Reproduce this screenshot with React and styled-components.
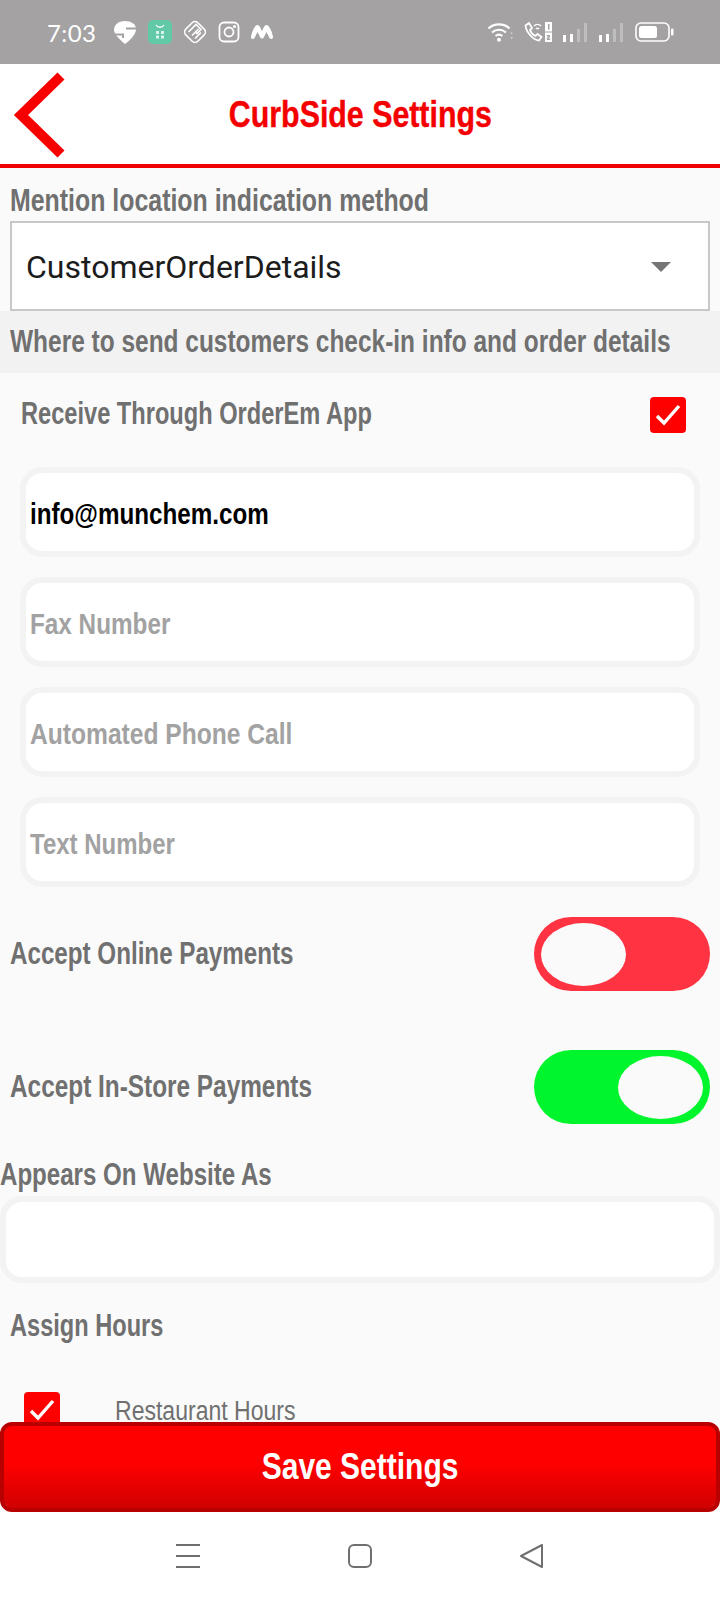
import React from "react";
import styled, { createGlobalStyle } from "styled-components";

const GlobalStyle = createGlobalStyle`
  html, body {
    margin: 0;
    padding: 0;
    background: #fafafa;
  }
  * {
    box-sizing: border-box;
  }
`;

const Page = styled.div`
  width: 720px;
  height: 1600px;
  display: flex;
  flex-direction: column;
  overflow: hidden;
  background: #fafafa;
  font-family: "Liberation Sans", Arial, sans-serif;
`;

const StatusBar = styled.div`
  height: 64px;
  flex-shrink: 0;
  background: #a4a2a3;
  display: flex;
  align-items: center;
  padding: 0 46px 0 47px;
  color: #fff;
`;

const Clock = styled.span`
  font-family: "Lato", sans-serif;
  font-size: 24px;
  letter-spacing: 0.4px;
  width: 66px;
`;

const StatusIcons = styled.div`
  display: flex;
  align-items: center;
  gap: ${(p) => p.$gap}px;
  margin-left: ${(p) => (p.$right ? "auto" : "0")};
`;

const Header = styled.header`
  height: 104px;
  flex-shrink: 0;
  background: #fff;
  border-bottom: 4px solid #f00000;
  position: relative;
  display: flex;
  align-items: center;
  justify-content: center;
  padding-top: 2px;
`;

const BackButton = styled.svg`
  position: absolute;
  left: 12px;
  top: 6px;
`;

const Title = styled.h1`
  margin: 0;
  font-size: 37px;
  line-height: 40px;
  font-weight: 700;
  color: #f40000;
  white-space: nowrap;
  -webkit-text-stroke: 0.4px #f40000;
  transform: scaleX(0.82);
`;

const Main = styled.main`
  flex: 1;
  min-height: 0;
  overflow: hidden;
`;

const Label = styled.span`
  display: inline-block;
  flex-shrink: 0;
  white-space: nowrap;
  font-size: 31px;
  font-weight: 700;
  line-height: 36px;
  color: #707070;
  margin-bottom: ${(p) => p.$lift || 0}px;
  transform: scaleX(${(p) => p.$scale});
  transform-origin: left center;
`;

const HoursLabel = styled(Label)`
  font-size: 27px;
  font-weight: 400;
  line-height: 22px;
  margin-top: 8px;
`;

const LabelBlock = styled.div`
  height: ${(p) => p.$height}px;
  padding: ${(p) => p.$pad};
  display: flex;
  align-items: ${(p) => p.$align || "center"};
`;

const SelectBox = styled.div`
  height: 90px;
  margin: 0 10px;
  background: #fff;
  border: 2px solid #c8c8c8;
  display: flex;
  align-items: center;
  justify-content: space-between;
  padding: 2px 37px 0 14px;
  font-family: "Roboto", sans-serif;
  font-size: 32px;
  color: #1c1c1c;
`;

const Caret = styled.span`
  width: 0;
  height: 0;
  border-left: 10px solid transparent;
  border-right: 10px solid transparent;
  border-top: 10px solid #757575;
`;

const Band = styled.div`
  height: 62px;
  background: #f2f2f2;
  padding: 0 10px;
  display: flex;
  align-items: center;
`;

const ReceiveRow = styled.div`
  height: 84px;
  padding: 0 34px 0 21px;
  display: flex;
  align-items: center;
  justify-content: space-between;
`;

const Checkbox = styled.span`
  width: 36px;
  height: 36px;
  flex-shrink: 0;
  border-radius: 4px;
  background: #fe0000;
  display: flex;
  align-items: center;
  justify-content: center;
`;

const InputList = styled.div`
  padding: 10px 20px 0;
  display: flex;
  flex-direction: column;
  gap: 20px;
`;

const InputField = styled.div`
  height: 90px;
  background: #fff;
  border: 6px solid #f3f3f3;
  border-radius: 22px;
  display: flex;
  align-items: center;
  padding: 4px 0 0 4px;
`;

const EmailText = styled.span`
  display: inline-block;
  white-space: nowrap;
  font-size: 29px;
  font-weight: 700;
  color: #000;
  transform: scaleX(0.835);
  transform-origin: left center;
`;

const Placeholder = styled.span`
  display: inline-block;
  white-space: nowrap;
  font-size: 30px;
  font-weight: 700;
  color: #a2a2a2;
  transform: scaleX(${(p) => p.$scale});
  transform-origin: left center;
`;

const ToggleRow = styled.div`
  height: 74px;
  margin-top: ${(p) => p.$top}px;
  padding: 0 10px;
  display: flex;
  align-items: center;
  justify-content: space-between;
`;

const Switch = styled.div`
  width: 176px;
  height: 74px;
  border-radius: 37px;
  background: ${(p) => (p.$on ? "#00f52d" : "#ff3341")};
  padding: 6px 7px;
  display: flex;
  justify-content: ${(p) => (p.$on ? "flex-end" : "flex-start")};
`;

const Thumb = styled.span`
  width: 85px;
  height: 63px;
  border-radius: 50%;
  background: #fafafa;
`;

const WebsiteInput = styled(InputField)`
  height: 87px;
`;

const HoursRow = styled.div`
  margin-top: 23px;
  padding-left: 24px;
  display: flex;
  align-items: flex-start;
  gap: 55px;
`;

const SaveButton = styled.button`
  height: 90px;
  width: 720px;
  flex-shrink: 0;
  border: 4px solid #b90000;
  border-radius: 12px;
  background: linear-gradient(to bottom, #ff0000 45%, #d00000 100%);
  display: flex;
  align-items: center;
  justify-content: center;
  padding: 0;
  font-family: inherit;
`;

const SaveText = styled.span`
  font-size: 36px;
  font-weight: 700;
  color: #fff;
  white-space: nowrap;
  transform: scaleX(0.833);
`;

const NavBar = styled.nav`
  height: 88px;
  flex-shrink: 0;
  background: #fff;
  display: flex;
  align-items: center;
  justify-content: center;
  gap: 148px;
`;

const Check = () => (
  <svg width="28" height="24" viewBox="0 0 28 24">
    <path d="M3 13l7 7L25 3" fill="none" stroke="#fff" strokeWidth="3.4" />
  </svg>
);

const Wifi = () => (
  <svg width="25" height="20" viewBox="0 0 25 20" fill="none" stroke="#fff" strokeWidth="2.2">
    <path d="M0.500 6.500C6 1 16 1 21.500 6.500" />
    <path d="M4 10.500C8 6.800 14 6.800 18 10.500" />
    <path d="M7.500 14c2.300-1.800 4.700-1.800 7 0" />
    <circle cx="11" cy="17.800" r="2" fill="#fff" stroke="none" />
    <path d="M22 12l1.800-2.500 1.200 2.500zM22 15l1.800 2.500 1.200-2.500z" fill="#fff" stroke="none" opacity="0.4" />
  </svg>
);

const CallIcon = () => (
  <svg width="28" height="20" viewBox="0 0 28 20">
    <path d="M1.500 3.500L5 1l3 5-2 2c1 3 3 5 5.500 6l2-2 4 3-2.500 3.500C9 18 2 10 1.500 3.500z" fill="none" stroke="#fff" strokeWidth="1.800" />
    <path d="M10 4c2-2 5-2 7 0M12 7c1-1 2-1 3 0" fill="none" stroke="#fff" strokeWidth="1.500" />
    <rect x="21" y="0" width="7" height="9.500" fill="#fff" />
    <rect x="21" y="10.500" width="7" height="9.500" fill="#fff" />
    <rect x="24" y="2" width="1.500" height="5.500" fill="#a4a2a3" />
    <path d="M22.800 13h3.200v2l-2 1.500h2.200v1.500h-3.400v-2l2-1.500h-2z" fill="#a4a2a3" />
  </svg>
);

const Signal = () => (
  <svg width="25" height="20" viewBox="0 0 25 20" fill="#fff">
    <rect x="0" y="13" width="3" height="7" />
    <rect x="7" y="12" width="3" height="8" />
    <rect x="14" y="7" width="3" height="13" opacity="0.3" />
    <rect x="21" y="1" width="3" height="19" opacity="0.3" />
  </svg>
);

const Battery = () => (
  <svg width="39" height="20" viewBox="0 0 39 20">
    <rect x="1" y="1" width="33" height="18" rx="5" fill="none" stroke="#fff" strokeWidth="1.600" />
    <rect x="4" y="4" width="18" height="12" rx="2.500" fill="#fff" />
    <rect x="36" y="6.500" width="2.500" height="7" rx="1" fill="#fff" />
  </svg>
);

export default function App() {
  return (
    <Page>
      <GlobalStyle />
      <StatusBar>
        <Clock>7:03</Clock>
        <StatusIcons $gap={11}>
          <svg width="24" height="24" viewBox="0 0 24 24">
            <path d="M12 1C5 1 1 5 1 10c0 4 6 10 11 14 4-3 11-9 11-15C23 4 18 1 12 1z" fill="#fff" />
            <path d="M24 8.500H13M0 14.500h10V18" fill="none" stroke="#a4a2a3" strokeWidth="2" />
          </svg>
          <svg width="24" height="24" viewBox="0 0 24 24">
            <rect width="24" height="24" rx="5" fill="#62c9a8" />
            <path d="M8 5c2 3 6 3 8 0" fill="none" stroke="#fff" strokeWidth="1.300" />
            <path d="M8 11h3v3H8zM13 11h3v3h-3zM8 15.500h3v3H8zM13 15.500h3v3h-3z" fill="#d8f3ea" />
          </svg>
          <svg width="24" height="24" viewBox="0 0 24 24" fill="none" stroke="#fff" strokeWidth="1.600">
            <rect x="3.500" y="3.500" width="17" height="17" rx="4" transform="rotate(45 12 12)" />
            <path d="M5.500 12L13 4.500l5 5-4 4-2-2M9 15.500l6.500-6.500M12 18.500l6-6" />
          </svg>
          <svg width="22" height="22" viewBox="0 0 22 22" fill="none" stroke="#fff" strokeWidth="1.800">
            <rect x="1.500" y="1.500" width="19" height="19" rx="4.500" />
            <circle cx="11" cy="11" r="4.500" />
            <circle cx="16.500" cy="5.500" r="0.700" fill="#fff" />
          </svg>
          <svg width="22" height="16" viewBox="0 0 22 16">
            <path d="M0 13C1 7 4 1 6.500 1c2 0 3 3 4.500 6 1.500-3 2.500-6 4.500-6C18 1 21 7 22 13c0 2-2 3-3.500 1l-3-6-2.500 5c-1 2-3 2-4 0L6.500 8l-3 6C2 16 0 15 0 13z" fill="#fff" />
          </svg>
        </StatusIcons>
        <StatusIcons $right $gap={11}>
          <Wifi />
          <CallIcon />
          <Signal />
          <Signal />
          <Battery />
        </StatusIcons>
      </StatusBar>

      <Header>
        <BackButton width="56" height="88" viewBox="0 0 56 88">
          <path d="M49 6L9 45l40 39" fill="none" stroke="#f80000" strokeWidth="10" />
        </BackButton>
        <Title>CurbSide Settings</Title>
      </Header>

      <Main>
        <LabelBlock $height={53} $pad="12px 10px 0">
          <Label $scale={0.803}>Mention location indication method</Label>
        </LabelBlock>
        <SelectBox>
          CustomerOrderDetails
          <Caret />
        </SelectBox>
        <Band>
          <Label $scale={0.789}>Where to send customers check-in info and order details</Label>
        </Band>
        <ReceiveRow>
          <Label $scale={0.762} $lift={2}>Receive Through OrderEm App</Label>
          <Checkbox>
            <Check />
          </Checkbox>
        </ReceiveRow>
        <InputList>
          <InputField>
            <EmailText>info@munchem.com</EmailText>
          </InputField>
          <InputField>
            <Placeholder $scale={0.81}>Fax Number</Placeholder>
          </InputField>
          <InputField>
            <Placeholder $scale={0.82}>Automated Phone Call</Placeholder>
          </InputField>
          <InputField>
            <Placeholder $scale={0.8}>Text Number</Placeholder>
          </InputField>
        </InputList>
        <ToggleRow $top={30}>
          <Label $scale={0.78}>Accept Online Payments</Label>
          <Switch>
            <Thumb />
          </Switch>
        </ToggleRow>
        <ToggleRow $top={59}>
          <Label $scale={0.786}>Accept In-Store Payments</Label>
          <Switch $on>
            <Thumb />
          </Switch>
        </ToggleRow>
        <LabelBlock $height={72} $pad="0 0 3px 0" $align="flex-end">
          <Label $scale={0.777}>Appears On Website As</Label>
        </LabelBlock>
        <WebsiteInput />
        <LabelBlock $height={86} $pad="0 10px">
          <Label $scale={0.761}>Assign Hours</Label>
        </LabelBlock>
        <HoursRow>
          <Checkbox>
            <Check />
          </Checkbox>
          <HoursLabel $scale={0.853}>Restaurant Hours</HoursLabel>
        </HoursRow>
      </Main>

      <SaveButton>
        <SaveText>Save Settings</SaveText>
      </SaveButton>

      <NavBar>
        <svg width="24" height="24" viewBox="0 0 24 24" stroke="#6f6f6f" strokeWidth="2">
          <path d="M0 1h24M0 12h24M0 23h24" />
        </svg>
        <svg width="24" height="24" viewBox="0 0 24 24" fill="none" stroke="#6f6f6f" strokeWidth="2">
          <rect x="1" y="1" width="22" height="22" rx="5" />
        </svg>
        <svg width="24" height="24" viewBox="0 0 24 24" fill="none" stroke="#6f6f6f" strokeWidth="2" strokeLinejoin="round">
          <path d="M22 1v22L1 12z" />
        </svg>
      </NavBar>
    </Page>
  );
}
